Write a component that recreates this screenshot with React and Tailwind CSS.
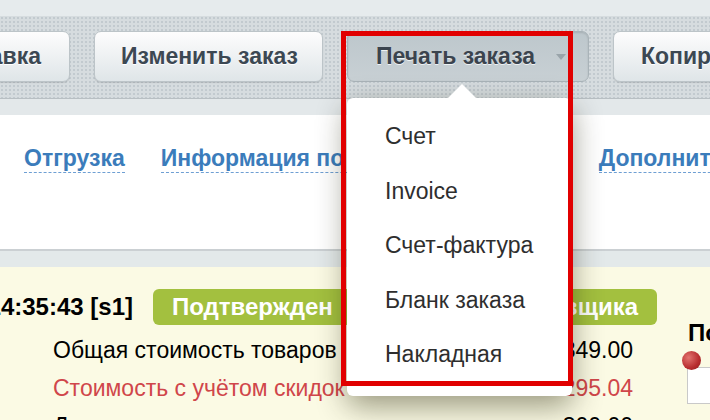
import React from 'react';

const menu = ['Счет', 'Invoice', 'Счет-фактура', 'Бланк заказа', 'Накладная'];

function ToolButton({ children, className = '' }) {
  return (
    <button
      className={
        'h-[51px] shrink-0 rounded-[7px] border border-[#bcc4c8] bg-linear-to-b from-[#fdfdfd] to-[#dfe5e8] ' +
        'shadow-[0_1px_1px_rgba(0,0,0,0.12)] px-[26px] text-[23px] font-bold text-[#3c4853] ' +
        'whitespace-nowrap [text-shadow:0_1px_0_#fff] ' +
        className
      }
    >
      {children}
    </button>
  );
}

export default function App() {
  return (
    <div className="relative w-[710px] h-[420px] overflow-hidden bg-[#fbfae4] font-['Liberation_Sans',Arial,sans-serif]">
      {/* top strip */}
      <div className="h-4 bg-[#e6ebed]" />

      {/* toolbar */}
      <div className="h-[83px] border-b border-[#b8bfc3] bg-[#d6dcdf] bg-[radial-gradient(circle,#c2cacf_0.9px,transparent_1.1px)] bg-[length:4px_4px] pt-[15px] flex gap-6">
        <div className="w-[70px] shrink-0 flex justify-end">
          <ToolButton className="pr-[28px]">Доставка</ToolButton>
        </div>
        <ToolButton className="w-[229px]">Изменить заказ</ToolButton>

        <div className="relative shrink-0">
          <button className="w-[242px] h-[51px] rounded-[7px] border border-[#a9b3b8] bg-linear-to-b from-[#bdc7cc] to-[#c8d0d4] shadow-[inset_0_1px_2px_rgba(0,0,0,0.12)] flex items-center justify-between pl-[28px] pr-[22px] text-[23px] font-bold text-[#3b444e] whitespace-nowrap [text-shadow:0_1px_0_#eef2f3]">
            Печать заказа
            <span className="w-0 h-0 border-x-[5px] border-x-transparent border-t-[6px] border-t-[#99a4aa]" />
          </button>

          {/* dropdown */}
          <div className="absolute left-0 top-[67px] z-10 w-[225px] h-[298px] rounded-md bg-white shadow-[0_10px_30px_rgba(30,30,0,0.45)] pt-[11px] pl-[38px]">
            <div className="absolute -top-[14px] left-[101px] w-0 h-0 border-x-[14px] border-x-transparent border-b-[14px] border-b-white" />
            {menu.map(item => (
              <div key={item} className="h-[54.5px] flex items-center text-[23px] text-[#2e2e2e] whitespace-nowrap">
                {item}
              </div>
            ))}
          </div>
        </div>

        <ToolButton className="px-[27px]">Копировать</ToolButton>
      </div>

      <div className="h-4 bg-[#e3e8ea]" />

      {/* tabs panel */}
      <div className="h-[136px] bg-white border-b-2 border-[#cbd0d3] pl-6 pt-[30px] flex gap-9 whitespace-nowrap">
        <span className="h-[28px] text-[23px] leading-[27px] font-bold text-[#3b7cbb] border-b border-dashed border-[#6e9fd3]">
          Отгрузка
        </span>
        <div className="w-[402px] shrink-0">
          <span className="inline-block h-[28px] text-[23px] leading-[27px] font-bold text-[#3b7cbb] border-b border-dashed border-[#6e9fd3]">
            Информация по заказу
          </span>
        </div>
        <span className="h-[28px] text-[23px] leading-[27px] font-bold text-[#3b7cbb] border-b border-dashed border-[#6e9fd3]">
          Дополнительно
        </span>
      </div>

      <div className="h-4 bg-[#e3e9ea]" />

      {/* order body */}
      <div className="flex pt-[22px] whitespace-nowrap">
        <div className="w-[657px] shrink-0">
          <div className="flex items-center gap-5 h-9">
            <div className="w-[133px] shrink-0 flex justify-end overflow-hidden">
              <span className="shrink-0 text-[24px] font-bold text-black">Заказ № 1042 от 18.05.2020 14:35:43 [s1]</span>
            </div>
            <div className="flex-1 h-9 rounded-md bg-[#a3c03f] flex items-center justify-between px-[19px] text-[24px] font-bold text-white">
              <span>Подтвержден</span>
              <span>Ожидает поставщика</span>
            </div>
          </div>

          <div className="mt-[6px] pl-[53px] pr-6 text-[23px]">
            <div className="h-[38px] flex items-center justify-between text-black">
              <span>Общая стоимость товаров</span>
              <span>3 849.00</span>
            </div>
            <div className="h-[38px] flex items-center justify-between text-[#d0464a]">
              <span>Стоимость с учётом скидок</span>
              <span>2 295.04</span>
            </div>
            <div className="h-[38px] flex items-center justify-between text-black">
              <span>Доставка</span>
              <span>300.00</span>
            </div>
          </div>
        </div>

        <div className="ml-[31px] shrink-0">
          <div className="mt-[31px] text-[24px] leading-[26px] font-bold text-black">Покупатель</div>
          <div className="relative mt-[21px] -ml-px h-[37px] w-[120px] bg-white border border-[#c9c9c9]">
            <span className="absolute -left-[6px] -top-[17px] w-[19px] h-[19px] rounded-full bg-[radial-gradient(circle_at_35%_35%,#e2736f,#b72c2e_60%,#8c1e21)]" />
          </div>
        </div>
      </div>

      {/* annotation frame */}
      <div className="absolute left-[341px] top-[31px] z-20 w-[232px] h-[355px] border-[5px] border-[#e10000] pointer-events-none" />
    </div>
  );
}
